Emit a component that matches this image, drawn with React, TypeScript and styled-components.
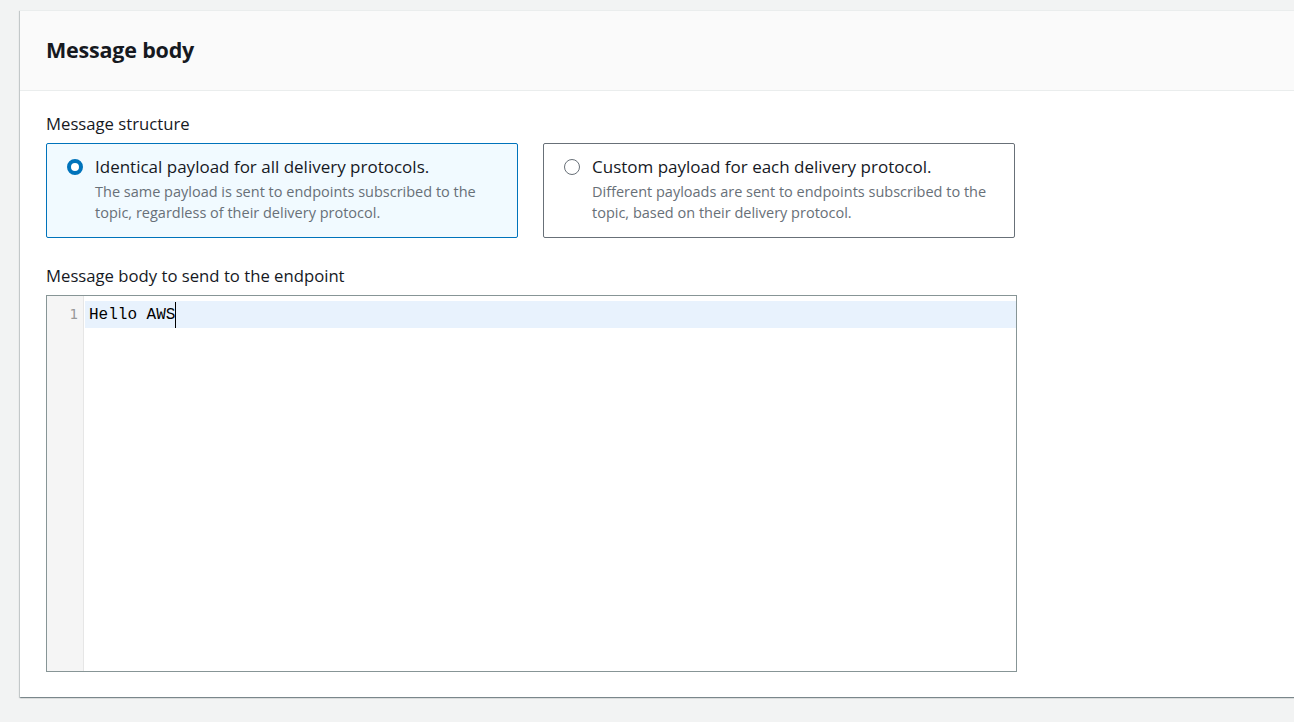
import React, { useState } from "react";
import styled, { createGlobalStyle } from "styled-components";

const Global = createGlobalStyle`
  html, body { margin: 0; padding: 0; background: #f2f3f3; overflow: hidden; }
  body { font-family: "Open Sans", "Noto Sans", Arial, sans-serif; color: #16191f; }
`;

const Page = styled.div`
  padding: 10px 0 0 20px;
  width: 1300px;
  height: 722px;
  box-sizing: border-box;
`;

const Container = styled.section`
  background: #fff;
  box-shadow: 0 1px 1px 0 rgba(0, 28, 36, 0.3), 1px 1px 1px 0 rgba(0, 28, 36, 0.15), -1px 1px 1px 0 rgba(0, 28, 36, 0.15);
  border-top: 1px solid #eaeded;
`;

const Header = styled.div`
  height: 80px;
  box-sizing: border-box;
  display: flex;
  align-items: center;
  padding: 0 26px 3px 26px;
  background: #fafafa;
  border-bottom: 1px solid #eaeded;
`;

const Title = styled.h2`
  margin: 0;
  font-size: 21.5px;
  font-weight: 700;
  color: #16191f;
  letter-spacing: -0.2px;
`;

const Content = styled.div`
  padding: 22px 26px 25px 26px;
`;

const Label = styled.div`
  font-size: 16.7px;
  line-height: 22px;
  color: #16191f;
  margin-bottom: 8px;
`;

const Tiles = styled.div`
  display: grid;
  grid-template-columns: 472px 472px;
  gap: 25px;
  margin-bottom: 27px;
`;

const Tile = styled.label<{ $selected: boolean }>`
  display: flex;
  gap: 12px;
  height: 95px;
  box-sizing: border-box;
  padding: 11px 20px;
  border: 1px solid ${(p) => (p.$selected ? "#0073bb" : "#687078")};
  background: ${(p) => (p.$selected ? "#f1faff" : "#fff")};
  border-radius: 2px;
  cursor: pointer;
`;

const Radio = styled.span<{ $checked: boolean }>`
  flex: none;
  width: 16px;
  height: 16px;
  margin-top: 4px;
  box-sizing: border-box;
  border-radius: 50%;
  border: ${(p) => (p.$checked ? "4.5px solid #0073bb" : "1.5px solid #687078")};
  background: #fff;
`;

const TileText = styled.div`
  display: flex;
  flex-direction: column;
`;

const TileTitle = styled.div`
  font-size: 17px;
  line-height: 23px;
  color: #16191f;
`;

const TileDesc = styled.div`
  font-size: 14.5px;
  line-height: 21px;
  color: #687078;
  margin-top: 3px;
`;

const Editor = styled.div`
  width: 971px;
  height: 377px;
  box-sizing: border-box;
  border: 1px solid #879596;
  display: flex;
`;

const Gutter = styled.div`
  width: 37px;
  flex: none;
  background: #f5f5f5;
  border-right: 1px solid #e6e6e6;
  box-sizing: border-box;
  padding-top: 5px;
  padding-right: 5px;
  font-family: "DejaVu Sans Mono", monospace;
  font-size: 14px;
  line-height: 27px;
  color: #999;
  text-align: right;
`;

const Code = styled.div`
  flex: 1;
  padding-top: 5px;
  padding-left: 1px;
`;

const ActiveLine = styled.div`
  height: 27px;
  background: #e8f2fd;
  display: flex;
  align-items: center;
  padding-left: 4px;
  font-family: "Liberation Mono", "DejaVu Sans Mono", monospace;
  font-size: 16px;
  color: #000;
`;

const Caret = styled.span`
  display: inline-block;
  width: 1px;
  height: 26px;
  background: #000;
`;

export default function App() {
  const [sel, setSel] = useState(0);
  const opts = [
    {
      t: "Identical payload for all delivery protocols.",
      d: "The same payload is sent to endpoints subscribed to the topic, regardless of their delivery protocol.",
    },
    {
      t: "Custom payload for each delivery protocol.",
      d: "Different payloads are sent to endpoints subscribed to the topic, based on their delivery protocol.",
    },
  ];
  return (
    <>
      <Global />
      <Page>
        <Container>
          <Header>
            <Title>Message body</Title>
          </Header>
          <Content>
            <Label>Message structure</Label>
            <Tiles>
              {opts.map((o, i) => (
                <Tile key={i} $selected={sel === i} onClick={() => setSel(i)}>
                  <Radio $checked={sel === i} />
                  <TileText>
                    <TileTitle>{o.t}</TileTitle>
                    <TileDesc>{o.d}</TileDesc>
                  </TileText>
                </Tile>
              ))}
            </Tiles>
            <Label>Message body to send to the endpoint</Label>
            <Editor>
              <Gutter>1</Gutter>
              <Code>
                <ActiveLine>
                  Hello AWS<Caret />
                </ActiveLine>
              </Code>
            </Editor>
          </Content>
        </Container>
      </Page>
    </>
  );
}
